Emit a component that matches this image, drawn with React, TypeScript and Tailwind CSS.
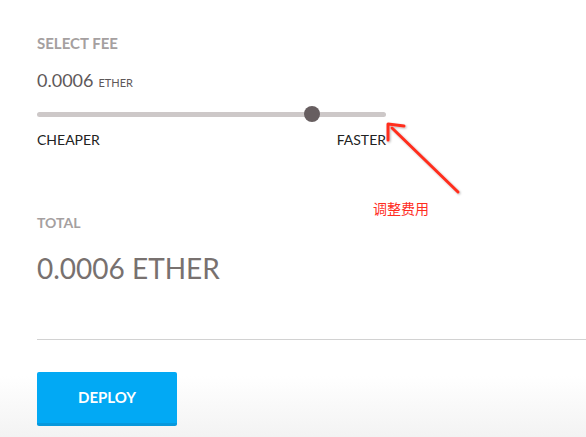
import React from "react";

export default function App() {
  const font = { fontFamily: "Lato, 'Noto Sans', sans-serif" };
  return (
    <div
      className="relative w-[586px] h-[437px] overflow-hidden bg-gradient-to-b from-white from-[86%] to-[#f3f3f3]"
      style={font}
    >
      <div className="pl-[37px] pt-[33px]">
        <div className="text-[15px] leading-[20px] font-bold text-[#a5a0a0]">SELECT FEE</div>
        <div className="mt-[15px] flex items-baseline text-[#5e5859]">
          <span className="text-[18px] leading-[24px]">0.0006</span>
          <span className="ml-[5px] text-[11px] leading-[24px]">ETHER</span>
        </div>
        <div className="mt-[11px] relative w-[349px] h-[16px] flex items-center">
          <div className="w-full h-[5px] rounded-full bg-[#cdc8c8]" />
          <div className="absolute left-[267px] top-0 w-[16px] h-[16px] rounded-full bg-[#675e60]" />
        </div>
        <div className="mt-[8px] w-[349px] flex justify-between text-[14px] leading-[20px] text-[#222]">
          <span>CHEAPER</span>
          <span>FASTER</span>
        </div>
        <div className="mt-[64px] text-[14px] leading-[18px] font-bold text-[#a5a0a0]">TOTAL</div>
        <div className="mt-[19px] text-[28px] leading-[34px] text-[#78716f]">0.0006 ETHER</div>
        <div className="mt-[54px] h-px bg-[#d2d2d2]" />
        <button className="mt-[32px] w-[140px] h-[54px] rounded-[2px] bg-[#02a9f4] border-b-[3px] border-[#0798dc] text-white text-[15px] font-bold">
          DEPLOY
        </button>
      </div>
      <svg className="absolute left-0 top-0" width="586" height="437">
        <defs>
          <filter id="sh" x="-20%" y="-20%" width="140%" height="140%">
            <feDropShadow dx="1" dy="1" stdDeviation="1" floodColor="#000" floodOpacity="0.3" />
          </filter>
        </defs>
        <g filter="url(#sh)" stroke="#ff2d1f" strokeWidth="3" strokeLinecap="round" fill="none">
          <line x1="458" y1="192" x2="392" y2="128" />
          <polyline points="388,140 388,124 404,126" strokeLinejoin="round" />
        </g>
      </svg>
      <div
        className="absolute left-[373px] top-[199px] text-[14px] leading-[18px] text-[#ff2d1f]"
        style={{ fontFamily: "'Noto Sans CJK SC', sans-serif" }}
      >
        调整费用
      </div>
    </div>
  );
}
